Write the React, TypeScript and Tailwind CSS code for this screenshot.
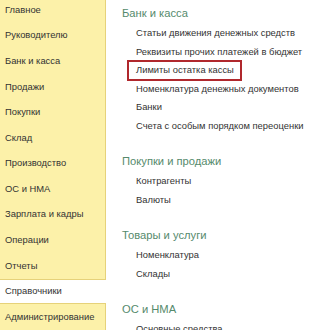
const menu = [
  "Главное",
  "Руководителю",
  "Банк и касса",
  "Продажи",
  "Покупки",
  "Склад",
  "Производство",
  "ОС и НМА",
  "Зарплата и кадры",
  "Операции",
  "Отчеты",
  "Справочники",
  "Администрирование",
];

const sections = [
  {
    title: "Банк и касса",
    items: [
      "Статьи движения денежных средств",
      "Реквизиты прочих платежей в бюджет",
      "Лимиты остатка кассы",
      "Номенклатура денежных документов",
      "Банки",
      "Счета с особым порядком переоценки",
    ],
  },
  { title: "Покупки и продажи", items: ["Контрагенты", "Валюты"] },
  { title: "Товары и услуги", items: ["Номенклатура", "Склады"] },
  { title: "ОС и НМА", items: ["Основные средства"] },
];

export default function App() {
  return (
    <div className="flex h-[330px] w-[322px] overflow-hidden bg-white font-['Liberation_Sans',Arial,sans-serif] text-[9.4px] text-[#333]">
      <div className="w-[106px] shrink-0 border-r border-[#e6d27a] bg-[#fcf1a9]">
        <div className="-mt-[3px]">
          {menu.map((m) => {
            const active = m === "Справочники";
            return (
              <div
                key={m}
                className={
                  active
                    ? "-mr-px flex h-[25.6px] items-center border-y border-[#e6d27a] bg-white pl-[5px]"
                    : "flex h-[25.6px] items-center pl-[5px]"
                }
              >
                {m}
              </div>
            );
          })}
        </div>
      </div>

      <div className="flex-1 pt-[2px] pl-[16px]">
        {sections.map((s) => (
          <div key={s.title} className="mb-[15px]">
            <div className="flex h-[22px] items-center text-[11.2px] text-[#558a6c]">
              {s.title}
            </div>
            {s.items.map((it) => (
              <div key={it} className="flex h-[18.5px] items-center whitespace-nowrap pl-[14px]">
                {it === "Лимиты остатка кассы" ? (
                  <span className="-ml-[9px] inline-flex h-[21px] items-center border-2 border-[#b0282d] pl-[7px] pr-[6px]">
                    {it}
                  </span>
                ) : (
                  it
                )}
              </div>
            ))}
          </div>
        ))}
      </div>
    </div>
  );
}
